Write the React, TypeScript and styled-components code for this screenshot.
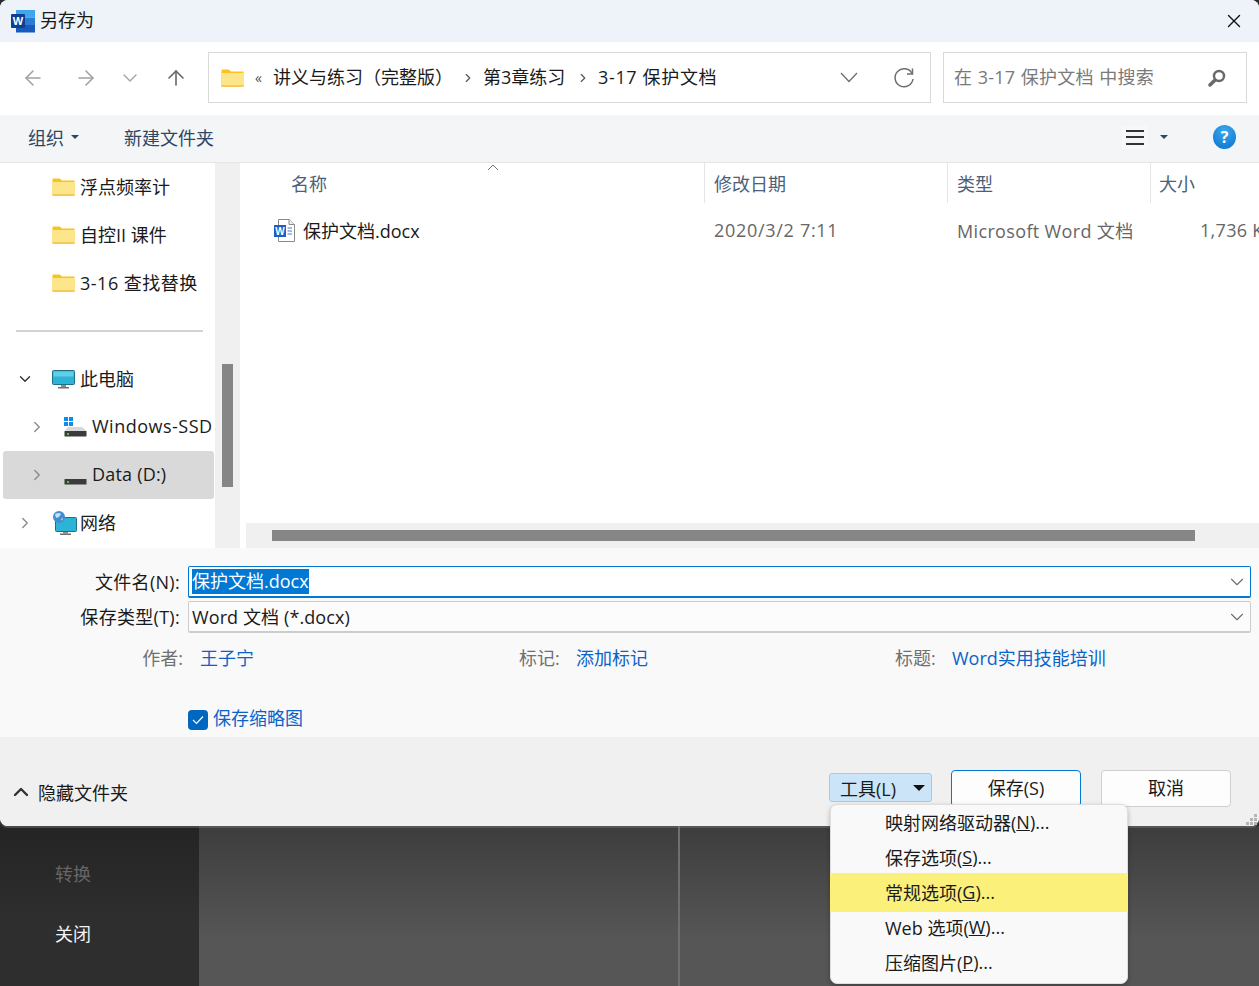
import { ReactNode } from 'react'
import styled, { createGlobalStyle } from 'styled-components'
import { ArrowLeft, ArrowRight, ArrowUp, ChevronDown, ChevronRight, ChevronUp, X } from 'lucide-react'

const Global = createGlobalStyle`
  html, body {
    margin: 0;
    padding: 0;
    background: #2b2b2b;
    overflow: hidden;
  }
  * {
    box-sizing: border-box;
  }
  body {
    font-family: "Open Sans", "Noto Sans CJK SC", sans-serif;
    font-size: 18px;
    color: #1a1a1a;
  }
`

const Page = styled.div`
  width: 1259px;
  height: 986px;
  display: flex;
  flex-direction: column;
  overflow: hidden;
`

const Dialog = styled.div`
  height: 826px;
  flex: none;
  display: flex;
  flex-direction: column;
  position: relative;
  z-index: 2;
  background: #f9f9f9;
  border-radius: 8px;
  box-shadow: 0 2px 0 rgba(120, 120, 120, 0.45);
`

const TitleBar = styled.div`
  height: 42px;
  flex: none;
  display: flex;
  align-items: center;
  padding: 0 14px 0 11px;
  border-radius: 8px 8px 0 0;
  background: #eef2f9;
`

const TitleText = styled.span`
  margin-left: 5px;
  margin-bottom: 4px;
  flex: 1;
`

const NavBar = styled.div`
  height: 73px;
  flex: none;
  display: flex;
  align-items: flex-start;
  padding-top: 10px;
  background: #fff;
`

const NavButtons = styled.div`
  width: 208px;
  height: 51px;
  flex: none;
  display: flex;
  align-items: center;
  padding-left: 21px;
`

const NavBtn = styled.span<{ $w: number; $c: string }>`
  width: ${(p) => p.$w}px;
  flex: none;
  display: flex;
  color: ${(p) => p.$c};
`

const Box = styled.div`
  height: 51px;
  display: flex;
  align-items: center;
  background: #fff;
  border: 1px solid #d9d9d9;
`

const AddressBox = styled(Box)`
  width: 723px;
  flex: none;
  padding-left: 12px;
`

const Crumb = styled.span<{ $w: number; $ls?: number }>`
  width: ${(p) => p.$w}px;
  flex: none;
  margin-bottom: 4px;
  letter-spacing: ${(p) => p.$ls || 0}px;
  white-space: nowrap;
`

const CrumbSep = styled.span<{ $w: number }>`
  width: ${(p) => p.$w}px;
  flex: none;
  display: flex;
  justify-content: center;
  color: #555;
`

const AddressTools = styled.div`
  margin-left: auto;
  display: flex;
  align-items: center;
  gap: 35px;
  padding-right: 15px;
  color: #6e6e6e;
`

const SearchBox = styled(Box)`
  width: 304px;
  margin-left: 12px;
  flex: none;
  padding: 0 20px 0 10px;
  justify-content: space-between;
  color: #7a7a7a;
`

const SearchHint = styled.span`
  margin-bottom: 4px;
  letter-spacing: 0.25px;
  word-spacing: 0.5px;
`

const ToolBar = styled.div`
  height: 48px;
  flex: none;
  display: flex;
  align-items: center;
  padding-left: 28px;
  padding-bottom: 3px;
  background: #f3f5f7;
  border-bottom: 1px solid #e3e5e8;
  color: #2d4663;
`

const Caret = styled.span<{ $c?: string }>`
  display: inline-block;
  width: 0;
  height: 0;
  border-left: 4px solid transparent;
  border-right: 4px solid transparent;
  border-top: 4px solid ${(p) => p.$c || '#2d4663'};
`

const ToolItem = styled.span`
  display: flex;
  align-items: center;
  gap: 7px;
  width: 96px;
  flex: none;
`

const ToolRight = styled.div`
  margin-left: auto;
  display: flex;
  align-items: center;
  padding-right: 23px;
`

const ListIcon = styled.span`
  width: 18px;
  height: 15px;
  border-top: 2px solid #333;
  border-bottom: 2px solid #333;
  position: relative;
  margin-right: 16px;
  box-shadow: 0 0 0 4px #f7f8f9;
  &::after {
    content: '';
    position: absolute;
    left: 0;
    right: 0;
    top: 4px;
    height: 2px;
    background: #333;
  }
`

const HelpIcon = styled.span`
  width: 23px;
  height: 24px;
  margin-left: 45px;
  border-radius: 50%;
  display: flex;
  align-items: center;
  justify-content: center;
  background: radial-gradient(circle at 50% 25%, #3aa7ee, #0a72cf);
  color: #fff;
  font-size: 16px;
  font-weight: 700;
`

const Main = styled.div`
  height: 385px;
  flex: none;
  display: flex;
  background: #fff;
  overflow: hidden;
`

const Tree = styled.div`
  width: 215px;
  flex: none;
  overflow: hidden;
`

const TreeRow = styled.div<{ $indent: number; $active?: boolean }>`
  height: 48px;
  display: flex;
  align-items: center;
  margin-left: 3px;
  margin-right: 1px;
  padding-left: ${(p) => p.$indent}px;
  border-radius: 3px;
  white-space: nowrap;
  background: ${(p) => (p.$active ? '#d9d9d9' : 'transparent')};
`

const Twisty = styled.span`
  width: 36px;
  flex: none;
  display: flex;
  color: #8a8a8a;
`

const RowIcon = styled.span`
  width: 28px;
  flex: none;
  display: flex;
`

const RowLabel = styled.span<{ $ls?: number }>`
  margin-bottom: 2px;
  letter-spacing: ${(p) => p.$ls || 0}px;
`

const TreeDivider = styled.div`
  height: 48px;
  display: flex;
  align-items: center;
  padding-left: 16px;
  &::after {
    content: '';
    width: 187px;
    height: 2px;
    background: #d3d3d3;
  }
`

const VTrack = styled.div`
  width: 25px;
  flex: none;
  padding: 201px 7px 0;
  background: #f0f0f0;
`

const VThumb = styled.div`
  height: 123px;
  background: #868686;
`

const Files = styled.div`
  flex: 1;
  min-width: 0;
  margin-left: 5px;
  display: flex;
  flex-direction: column;
`

const FileGrid = styled.div`
  display: grid;
  grid-template-columns: 459px 243px 203px 120px;
  align-items: center;
`

const HeaderRow = styled(FileGrid)`
  height: 40px;
  flex: none;
`

const HeaderCell = styled.div<{ $pad: number }>`
  height: 40px;
  display: flex;
  align-items: center;
  padding-left: ${(p) => p.$pad}px;
  border-left: 1px solid #e5e5e5;
  color: #4c607a;
  white-space: nowrap;
  position: relative;
  &:first-child {
    border-left: 0;
  }
`

const SortMark = styled.svg`
  position: absolute;
  left: 242px;
  top: 1px;
`

const FileRow = styled(FileGrid)`
  height: 56px;
  flex: none;
  padding-bottom: 2px;
  color: #666;
`

const NameCell = styled.div`
  display: flex;
  align-items: center;
  padding-left: 29px;
  color: #1a1a1a;
  gap: 8px;
  white-space: nowrap;
`

const FileCell = styled.div<{ $pad: number; $ls?: number }>`
  padding-left: ${(p) => p.$pad}px;
  letter-spacing: ${(p) => p.$ls || 0}px;
  white-space: nowrap;
`

const HScroll = styled.div`
  margin-top: auto;
  height: 25px;
  flex: none;
  margin-left: 1px;
  padding: 7px 0 0 26px;
  background: #f0f0f0;
`

const HThumb = styled.div`
  width: 923px;
  height: 11px;
  background: #868686;
`

const Form = styled.div`
  height: 189px;
  flex: none;
  padding: 18px 8px 0 0;
  background: #f9f9f9;
`

const FieldRow = styled.div`
  display: flex;
  align-items: center;
  margin-bottom: 3px;
`

const FieldLabel = styled.label`
  width: 180px;
  flex: none;
  margin-right: 8px;
  margin-bottom: 2px;
  text-align: right;
  letter-spacing: 0.3px;
`

const Field = styled.div<{ $focus?: boolean }>`
  flex: 1;
  height: 32px;
  display: flex;
  align-items: center;
  justify-content: space-between;
  padding: 0 2px 0 3px;
  border-radius: 2px;
  border: 1px solid ${(p) => (p.$focus ? '#0078d4' : '#cccccc')};
  border-bottom-width: 2px;
  background: ${(p) => (p.$focus ? '#fff' : '#fcfcfc')};
  color: #6e6e6e;
`

const FieldValue = styled.span<{ $selected?: boolean }>`
  margin-top: ${(p) => (p.$selected ? 0 : 2)}px;
  letter-spacing: ${(p) => (p.$selected ? 0 : 0.1)}px;
  color: ${(p) => (p.$selected ? '#fff' : '#1a1a1a')};
  background: ${(p) => (p.$selected ? '#0078d4' : 'transparent')};
  line-height: 25px;
  white-space: nowrap;
`

const MetaRow = styled.div`
  height: 48px;
  margin-top: -3px;
  display: flex;
  align-items: center;
`

const MetaItem = styled.div<{ $w: number }>`
  width: ${(p) => p.$w}px;
  flex: none;
  display: flex;
  white-space: nowrap;
`

const MetaKey = styled.span<{ $w: number }>`
  width: ${(p) => p.$w}px;
  flex: none;
  text-align: right;
  margin-right: 17px;
  color: #707070;
`

const MetaValue = styled.span`
  color: #0a63c8;
`

const ThumbRow = styled.div`
  margin-top: 23px;
  padding-left: 188px;
  display: flex;
  align-items: center;
  gap: 5px;
  color: #0a63c8;
`

const ThumbLabel = styled.span`
  margin-bottom: 6px;
`

const CheckBox = styled.span`
  width: 20px;
  height: 20px;
  border-radius: 4px;
  background: #0067c0;
  display: flex;
  align-items: center;
  justify-content: center;
`

const Footer = styled.div`
  flex: 1;
  min-height: 0;
  display: flex;
  align-items: flex-start;
  padding: 33px 28px 0 9px;
  border-radius: 0 0 8px 8px;
  background: #f0f0f0;
  position: relative;
`

const HideToggle = styled.div`
  display: flex;
  align-items: center;
  gap: 5px;
  margin-top: 9px;
  margin-right: auto;
  color: #1a1a1a;
`

const ToolsWrap = styled.div`
  position: relative;
  margin-top: 3px;
  margin-right: 19px;
`

const ToolsBtn = styled.div`
  width: 103px;
  height: 29px;
  display: flex;
  align-items: center;
  padding-left: 10px;
  border: 1px solid #99cdf5;
  border-radius: 3px;
  background: #cce4f7;
  white-space: nowrap;
`

const ToolsArrow = styled.span`
  margin-left: 17px;
  width: 0;
  height: 0;
  border-left: 6px solid transparent;
  border-right: 6px solid transparent;
  border-top: 6px solid #111;
`

const Button = styled.div<{ $primary?: boolean }>`
  width: 130px;
  height: 37px;
  margin-left: ${(p) => (p.$primary ? 0 : 20)}px;
  padding-bottom: 3px;
  display: flex;
  align-items: center;
  justify-content: center;
  border-radius: 4px;
  background: #fdfdfd;
  border: 1px solid ${(p) => (p.$primary ? '#0078d4' : '#cfcfcf')};
`

const Grip = styled.svg`
  position: absolute;
  right: 2px;
  bottom: 1px;
`

const Menu = styled.div`
  position: absolute;
  left: 1px;
  top: 31px;
  width: 298px;
  height: 180px;
  background: #f9f9f9;
  border: 1px solid #dedede;
  border-radius: 7px;
  box-shadow: 0 2px 5px rgba(0, 0, 0, 0.25);
  z-index: 5;
`

const MenuItem = styled.div<{ $hot?: boolean }>`
  height: ${(p) => (p.$hot ? 39 : 35)}px;
  margin: ${(p) => (p.$hot ? '-2px -1px' : '0')};
  display: flex;
  align-items: center;
  padding-left: ${(p) => (p.$hot ? 55 : 54)}px;
  padding-bottom: 2px;
  white-space: pre;
  background: ${(p) => (p.$hot ? '#faf07a' : 'transparent')};
`

const Behind = styled.div`
  flex: 1;
  display: flex;
  min-height: 0;
`

const SideMenu = styled.div`
  width: 199px;
  flex: none;
  padding: 17px 0 0 55px;
  background: linear-gradient(#242424, #2e2e2e 60%);
  color: #f2f2f2;
`

const SideItem = styled.div<{ $dim?: boolean }>`
  height: 60px;
  display: flex;
  align-items: center;
  color: ${(p) => (p.$dim ? '#666' : '#f2f2f2')};
`

const Stage = styled.div`
  flex: 1;
  display: flex;
  padding-left: 479px;
  background: linear-gradient(#3d3d3d, #565656 70%);
  &::before {
    content: '';
    width: 2px;
    background: #6f6f6f;
  }
`

function WordLogo() {
  return (
    <svg width="24" height="24" viewBox="0 0 24 24">
      <rect x="5" y="1" width="19" height="7.5" fill="#41a5ee" />
      <rect x="5" y="8.5" width="19" height="7.5" fill="#2b7cd3" />
      <rect x="5" y="16" width="19" height="7.5" fill="#185abd" />
      <rect x="0" y="5" width="14" height="14" rx="1" fill="#103f91" />
      <text x="7" y="16" textAnchor="middle" fontSize="11" fontWeight="700" fill="#fff" fontFamily="Liberation Sans, sans-serif">W</text>
    </svg>
  )
}

function Folder({ w = 23 }: { w?: number }) {
  return (
    <svg width={w} height={(w * 18) / 23} viewBox="0 0 23 18">
      <path d="M0.5 1.5 Q0.5 0.5 1.5 0.5 H7.5 L10 2.5 H22.5 V17.5 H0.5 Z" fill="#fcc21b" />
      <rect x="0.5" y="4" width="22" height="13.5" fill="#fde58c" />
      <rect x="0.5" y="16.5" width="22" height="1" fill="#f0b020" />
    </svg>
  )
}

function Monitor() {
  return (
    <svg width="23" height="19" viewBox="0 0 23 19">
      <rect x="0.5" y="0.5" width="22" height="14" rx="1" fill="#2cb4d6" stroke="#1d6f8a" />
      <rect x="1.5" y="1.5" width="20" height="5" fill="#5fd0e6" />
      <rect x="9" y="15" width="5" height="2" fill="#8b8b8b" />
      <rect x="6" y="17" width="11" height="1.5" fill="#6f6f6f" />
    </svg>
  )
}

function Drive({ windows }: { windows?: boolean }) {
  return (
    <svg width="23" height="20" viewBox="0 0 23 20">
      {windows && (
        <g fill="#0f8be8">
          <rect x="0" y="0" width="4" height="4" />
          <rect x="5" y="0" width="4" height="4" />
          <rect x="0" y="5" width="4" height="4" />
          <rect x="5" y="5" width="4" height="4" />
        </g>
      )}
      <path d="M4 10 H18 L22.5 14 H0.5 Z" fill="#d8d8d8" />
      <rect x="0.5" y="14" width="22" height="5.5" rx="0.5" fill="#3b3b3b" />
      <rect x="3" y="16" width="2" height="2" fill="#3ed23e" />
    </svg>
  )
}

function Network() {
  return (
    <svg width="25" height="25" viewBox="0 0 25 25">
      <rect x="3.5" y="6.5" width="21" height="14" rx="1" fill="#2cb4d6" stroke="#1d6f8a" />
      <rect x="11" y="21" width="5" height="1.5" fill="#8b8b8b" />
      <rect x="8" y="22.5" width="11" height="1.5" fill="#6f6f6f" />
      <circle cx="7" cy="6" r="6" fill="#3f8fd0" />
      <path d="M3 3 Q7 1 9 3 L7 6 L4 7 Z M9 8 L11 7 L10 10 Z" fill="#c9dfef" />
    </svg>
  )
}

function DocIcon() {
  return (
    <svg width="21" height="23" viewBox="0 0 21 23">
      <path d="M4.5 0.5 H15 L20.5 5.5 V22.5 H4.5 Z" fill="#fff" stroke="#8a8a8a" />
      <path d="M15 0.5 V5.5 H20.5" fill="#eee" stroke="#8a8a8a" />
      <rect x="0" y="6" width="12" height="12" fill="#1e5ec0" />
      <text x="6" y="16" textAnchor="middle" fontSize="10" fontWeight="700" fill="#fff" fontFamily="Liberation Sans, sans-serif">W</text>
      <path d="M13.5 9 H18 M13.5 12 H18 M13.5 15 H18" stroke="#3f7fd0" />
    </svg>
  )
}

function WideChevron() {
  return (
    <svg width="18" height="11" viewBox="0 0 18 11" fill="none" stroke="currentColor" strokeWidth="1.3">
      <path d="M1 1 L9 9.5 L17 1" />
    </svg>
  )
}

function Refresh() {
  return (
    <svg width="22" height="22" viewBox="0 0 22 22" fill="none" stroke="currentColor" strokeWidth="1.5">
      <path d="M19 6.5 A9 9 0 1 0 20 12" />
      <path d="M19.5 1.5 V7 H14" />
    </svg>
  )
}

function SearchGlass() {
  return (
    <svg width="18" height="18" viewBox="0 0 18 18" fill="none">
      <circle cx="11" cy="7" r="5" stroke="#6a6a6a" strokeWidth="2.5" />
      <path d="M7 11 L2 16" stroke="#6a6a6a" strokeWidth="3.5" strokeLinecap="round" />
    </svg>
  )
}

function ResizeGrip() {
  const dots = [[10, 2], [6, 6], [10, 6], [2, 10], [6, 10], [10, 10]]
  return (
    <Grip width="13" height="13" viewBox="0 0 13 13">
      {dots.map(([x, y]) => (
        <rect key={`${x}-${y}`} x={x} y={y} width="3" height="3" fill="#b5b5b5" />
      ))}
    </Grip>
  )
}

type TreeItem = {
  label: string
  icon: ReactNode
  indent: number
  ls?: number
  twisty?: 'open' | 'closed'
  active?: boolean
}

const topFolders: TreeItem[] = [
  { label: '浮点频率计', icon: <Folder />, indent: 49 },
  { label: '自控II 课件', icon: <Folder />, indent: 49 },
  { label: '3-16 查找替换', icon: <Folder />, indent: 49, ls: 0.5 },
]

const places: TreeItem[] = [
  { label: '此电脑', icon: <Monitor />, indent: 13, twisty: 'open' },
  { label: 'Windows-SSD', icon: <Drive windows />, indent: 25, twisty: 'closed', ls: 0.5 },
  { label: 'Data (D:)', icon: <Drive />, indent: 25, twisty: 'closed', active: true, ls: 0.2 },
  { label: '网络', icon: <Network />, indent: 13, twisty: 'closed' },
]

function TreeLine({ item }: { item: TreeItem }) {
  return (
    <TreeRow $indent={item.indent} $active={item.active}>
      {item.twisty && (
        <Twisty>
          {item.twisty === 'open' ? (
            <ChevronDown size={18} color="#333" strokeWidth={1.8} />
          ) : (
            <ChevronRight size={18} strokeWidth={1.8} />
          )}
        </Twisty>
      )}
      <RowIcon>{item.icon}</RowIcon>
      <RowLabel $ls={item.ls}>{item.label}</RowLabel>
    </TreeRow>
  )
}

const menuItems = [
  { text: '映射网络驱动器', key: 'N' },
  { text: '保存选项', key: 'S' },
  { text: '常规选项', key: 'G', hot: true },
  { text: 'Web 选项', key: 'W' },
  { text: '压缩图片', key: 'P' },
]

export default function App() {
  return (
    <Page>
      <Global />
      <Dialog>
        <TitleBar>
          <WordLogo />
          <TitleText>另存为</TitleText>
          <X size={22} strokeWidth={1.5} color="#111" />
        </TitleBar>

        <NavBar>
          <NavButtons>
            <NavBtn $w={53} $c="#a3a3a3"><ArrowLeft size={24} strokeWidth={1.6} /></NavBtn>
            <NavBtn $w={44} $c="#a3a3a3"><ArrowRight size={24} strokeWidth={1.6} /></NavBtn>
            <NavBtn $w={46} $c="#a3a3a3"><ChevronDown size={24} strokeWidth={1.4} /></NavBtn>
            <NavBtn $w={24} $c="#666"><ArrowUp size={26} strokeWidth={1.6} /></NavBtn>
          </NavButtons>
          <AddressBox>
            <Folder />
            <CrumbSep $w={29}><span style={{ fontSize: 14 }}>«</span></CrumbSep>
            <Crumb $w={180}>讲义与练习（完整版）</Crumb>
            <CrumbSep $w={30}><ChevronRight size={14} strokeWidth={2} /></CrumbSep>
            <Crumb $w={84}>第3章练习</Crumb>
            <CrumbSep $w={31}><ChevronRight size={14} strokeWidth={2} /></CrumbSep>
            <Crumb $w={125} $ls={0.65}>3-17 保护文档</Crumb>
            <AddressTools>
              <WideChevron />
              <Refresh />
            </AddressTools>
          </AddressBox>
          <SearchBox>
            <SearchHint>在 3-17 保护文档 中搜索</SearchHint>
            <SearchGlass />
          </SearchBox>
        </NavBar>

        <ToolBar>
          <ToolItem>组织<Caret /></ToolItem>
          <span>新建文件夹</span>
          <ToolRight>
            <ListIcon />
            <Caret />
            <HelpIcon>?</HelpIcon>
          </ToolRight>
        </ToolBar>

        <Main>
          <Tree>
            {topFolders.map((item) => <TreeLine key={item.label} item={item} />)}
            <TreeDivider />
            {places.map((item) => <TreeLine key={item.label} item={item} />)}
          </Tree>
          <VTrack><VThumb /></VTrack>
          <Files>
            <HeaderRow>
              <HeaderCell $pad={46}>
                名称
                <SortMark width="12" height="7" viewBox="0 0 12 7" fill="none" stroke="#777">
                  <path d="M1 6 L6 1 L11 6" />
                </SortMark>
              </HeaderCell>
              <HeaderCell $pad={9}>修改日期</HeaderCell>
              <HeaderCell $pad={9}>类型</HeaderCell>
              <HeaderCell $pad={8}>大小</HeaderCell>
            </HeaderRow>
            <FileRow>
              <NameCell><DocIcon />保护文档.docx</NameCell>
              <FileCell $pad={10} $ls={0.7}>2020/3/2 7:11</FileCell>
              <FileCell $pad={10} $ls={0.35}>Microsoft Word 文档</FileCell>
              <FileCell $pad={50} $ls={0.3}>1,736 KB</FileCell>
            </FileRow>
            <HScroll><HThumb /></HScroll>
          </Files>
        </Main>

        <Form>
          <FieldRow>
            <FieldLabel>文件名(N):</FieldLabel>
            <Field $focus>
              <FieldValue $selected>保护文档.docx</FieldValue>
              <ChevronDown size={22} strokeWidth={1.2} />
            </Field>
          </FieldRow>
          <FieldRow>
            <FieldLabel>保存类型(T):</FieldLabel>
            <Field>
              <FieldValue>Word 文档 (*.docx)</FieldValue>
              <ChevronDown size={22} strokeWidth={1.2} />
            </Field>
          </FieldRow>
          <MetaRow>
            <MetaItem $w={519}><MetaKey $w={183}>作者:</MetaKey><MetaValue>王子宁</MetaValue></MetaItem>
            <MetaItem $w={376}><MetaKey $w={40}>标记:</MetaKey><MetaValue>添加标记</MetaValue></MetaItem>
            <MetaItem $w={300}><MetaKey $w={40}>标题:</MetaKey><MetaValue>Word实用技能培训</MetaValue></MetaItem>
          </MetaRow>
          <ThumbRow>
            <CheckBox>
              <svg width="12" height="10" viewBox="0 0 12 10" fill="none" stroke="#fff" strokeWidth="1.2">
                <path d="M1 5 L4.5 8.5 L11 1.5" />
              </svg>
            </CheckBox>
            <ThumbLabel>保存缩略图</ThumbLabel>
          </ThumbRow>
        </Form>

        <Footer>
          <HideToggle>
            <ChevronUp size={24} strokeWidth={2.4} color="#333" />
            隐藏文件夹
          </HideToggle>
          <ToolsWrap>
            <ToolsBtn>工具(L)<ToolsArrow /></ToolsBtn>
            <Menu>
              {menuItems.map((m) => (
                <MenuItem key={m.key} $hot={m.hot}>
                  {m.text}(<u>{m.key}</u>)...
                </MenuItem>
              ))}
            </Menu>
          </ToolsWrap>
          <Button $primary>保存(S)</Button>
          <Button>取消</Button>
          <ResizeGrip />
        </Footer>
      </Dialog>

      <Behind>
        <SideMenu>
          <SideItem $dim>转换</SideItem>
          <SideItem>关闭</SideItem>
        </SideMenu>
        <Stage />
      </Behind>
    </Page>
  )
}
